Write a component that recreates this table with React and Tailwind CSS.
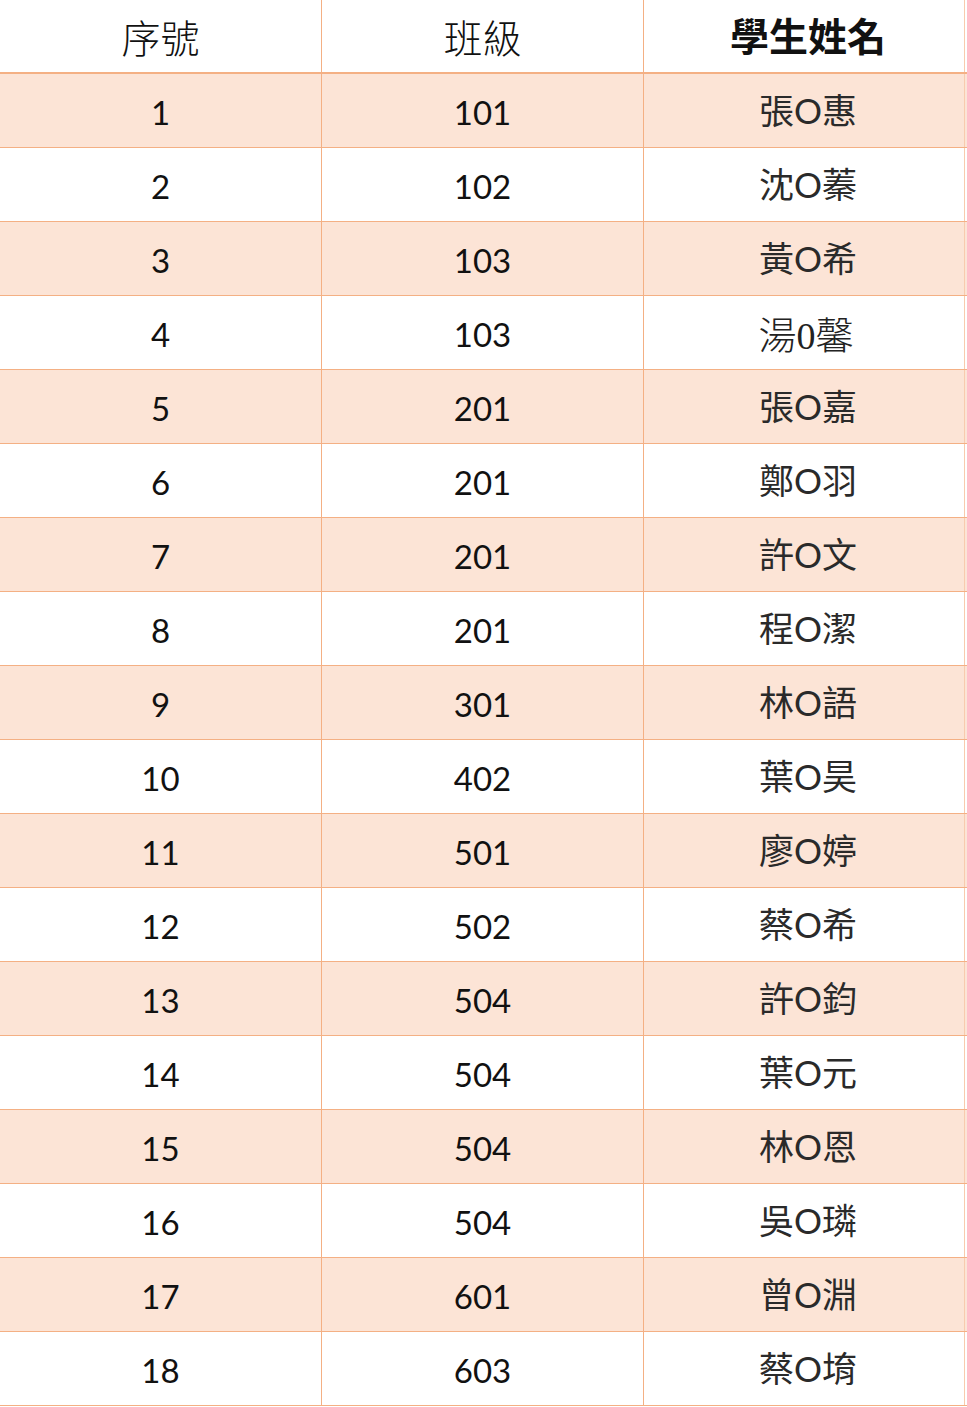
import React from "react";

const rows = [
  ["1", "101", "張O惠"],
  ["2", "102", "沈O蓁"],
  ["3", "103", "黃O希"],
  ["4", "103", "湯0馨"],
  ["5", "201", "張O嘉"],
  ["6", "201", "鄭O羽"],
  ["7", "201", "許O文"],
  ["8", "201", "程O潔"],
  ["9", "301", "林O語"],
  ["10", "402", "葉O昊"],
  ["11", "501", "廖O婷"],
  ["12", "502", "蔡O希"],
  ["13", "504", "許O鈞"],
  ["14", "504", "葉O元"],
  ["15", "504", "林O恩"],
  ["16", "504", "吳O璘"],
  ["17", "601", "曾O淵"],
  ["18", "603", "蔡O堉"],
];

const font = { fontFamily: "Lato, 'Noto Sans CJK TC', sans-serif" };

export default function App() {
  return (
    <div className="w-[967px] h-[1407px] bg-white text-[#111]" style={font}>
      {/* header */}
      <div className="grid grid-cols-[322px_322px_321px] h-[74px] border-b-2 border-[#f4b084]">
        <div className="flex items-center justify-center border-r border-[#f4b084] text-[39px] font-light pt-1">序號</div>
        <div className="flex items-center justify-center border-r border-[#f4b084] text-[39px] font-light pt-1">班級</div>
        <div className="flex items-center justify-center border-r border-[#f8cbad] text-[39px] font-bold pl-2">學生姓名</div>
      </div>
      {/* rows */}
      {rows.map((r, i) => (
        <div
          key={i}
          className={
            "grid grid-cols-[322px_322px_321px] h-[74px] border-b border-[#f4b084] " +
            (i % 2 === 0 ? "bg-[#fce4d6]" : "bg-white")
          }
        >
          <div className="flex items-center justify-center border-r border-[#f4b084] text-[33px] pt-1">{r[0]}</div>
          <div className="flex items-center justify-center border-r border-[#f4b084] text-[33px] pt-1">{r[1]}</div>
          {i === 3 ? (
            <div
              className="flex items-center justify-center border-r border-[#f8cbad] text-[38px] font-light text-[#222] pl-1 pt-2"
              style={{ fontFamily: "'Liberation Serif', 'Noto Sans CJK TC', serif" }}
            >
              {r[2]}
            </div>
          ) : (
            <div className="flex items-center justify-center border-r border-[#f8cbad] text-[35px] text-[#2a2a2a] pl-2">
              {r[2]}
            </div>
          )}
        </div>
      ))}
    </div>
  );
}
